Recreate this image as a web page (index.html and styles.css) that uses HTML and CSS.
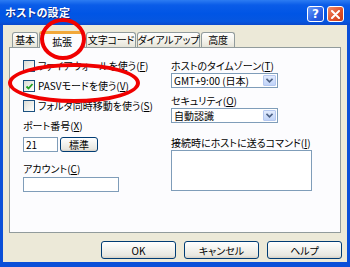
FILE: index.html
```html
<!DOCTYPE html>
<html lang="ja">
<head>
    <meta charset="UTF-8">
    <title>ホストの設定</title>
    <link rel="stylesheet" href="styles.css">
</head>
<body>
    <div class="window">
        <div class="titlebar">
            <span class="title">ホストの設定</span>
            <div class="caption">
                <span class="cap-btn cap-help">?</span>
                <span class="cap-btn cap-close">
                    <svg width="9" height="9" viewBox="0 0 9 9"><path d="M1 1L8 8M8 1L1 8" stroke="#fff" stroke-width="2" stroke-linecap="round"/></svg>
                </span>
            </div>
        </div>
        <div class="client">
            <div class="tabs">
                <span class="tab tab-1">基本</span>
                <span class="tab tab-2 active">拡張</span>
                <span class="tab tab-3">文字コード</span>
                <span class="tab tab-4">ダイアルアップ</span>
                <span class="tab tab-5">高度</span>
            </div>
            <div class="panel">
                <div class="col col-left">
                    <div class="check"><span class="box"></span>ファイアウォールを使う(<u>F</u>)</div>
                    <div class="check"><span class="box checked"><svg width="9" height="9" viewBox="0 0 9 9"><path d="M1.5 4.5L3.5 6.5L7.5 2" stroke="#21a121" stroke-width="1.8" fill="none"/></svg></span>PASVモードを使う(<u>V</u>)</div>
                    <div class="check"><span class="box"></span>フォルダ同時移動を使う(<u>S</u>)</div>
                    <div class="label">ポート番号(<u>X</u>)</div>
                    <div class="port-row">
                        <div class="input input-port">21</div>
                        <div class="btn btn-small">標準</div>
                    </div>
                    <div class="label label-account">アカウント(<u>C</u>)</div>
                    <div class="input input-account"></div>
                </div>
                <div class="col col-right">
                    <div class="label">ホストのタイムゾーン(<u>T</u>)</div>
                    <div class="select">
                        <span class="select-text">GMT+9:00 (日本)</span>
                        <span class="drop"><svg width="7" height="5" viewBox="0 0 7 5"><path d="M0.5 0.8L3.5 3.8L6.5 0.8" stroke="#4d6185" stroke-width="1.6" fill="none"/></svg></span>
                    </div>
                    <div class="label label-sec">セキュリティ(<u>O</u>)</div>
                    <div class="select">
                        <span class="select-text">自動認識</span>
                        <span class="drop"><svg width="7" height="5" viewBox="0 0 7 5"><path d="M0.5 0.8L3.5 3.8L6.5 0.8" stroke="#4d6185" stroke-width="1.6" fill="none"/></svg></span>
                    </div>
                    <div class="label label-cmd">接続時にホストに送るコマンド(<u>I</u>)</div>
                    <div class="textarea"></div>
                </div>
            </div>
            <div class="buttons">
                <div class="btn btn-main">OK</div>
                <div class="btn btn-main">キャンセル</div>
                <div class="btn btn-main">ヘルプ</div>
            </div>
        </div>
        <div class="mark mark-tab"></div>
        <div class="mark mark-pasv"></div>
    </div>
</body>
</html>
```

FILE: styles.css
```css
body {
    margin: 0;
    font-family: "Noto Sans CJK JP", "Noto Sans", sans-serif;
    font-size: 10px;
    font-feature-settings: "palt";
    color: #000;
    background: #fff;
}
u {
    text-decoration: underline;
    text-underline-offset: 1px;
}

.window {
    position: relative;
    width: 350px;
    height: 267px;
    display: flex;
    flex-direction: column;
    background: #0a4fd8;
    overflow: hidden;
}

/* title bar */
.titlebar {
    height: 25px;
    display: flex;
    align-items: center;
    justify-content: space-between;
    padding: 0 6px 0 5px;
    background: linear-gradient(#2c7cf2 0, #0a5ce8 20%, #0055e5 55%, #0656e0 85%, #0a48cc 100%);
}
.title {
    color: #fff;
    font-weight: bold;
    font-size: 11px;
    letter-spacing: 0.3px;
    text-shadow: 1px 1px 0 #0a2a8a;
    margin-top: -1px;
}
.caption {
    display: flex;
    gap: 3px;
    margin-top: 3px;
}
.cap-btn {
    width: 15px;
    height: 14px;
    border: 1px solid #fff;
    border-radius: 3px;
    display: flex;
    align-items: center;
    justify-content: center;
    color: #fff;
    font-family: "DejaVu Sans", sans-serif;
    font-weight: bold;
    font-size: 12px;
}
.cap-help {
    background: linear-gradient(135deg, #6a9cf8, #2a5fe6 60%, #1f4fd0);
}
.cap-close {
    background: linear-gradient(135deg, #f08a68, #e0532d 55%, #c83a18);
}

/* client area */
.client {
    flex: 1;
    margin: 0 3px 5px 3px;
    background: #ece9d8;
    display: flex;
    flex-direction: column;
    padding: 4px 6px 3px 6px;
}

.tabs {
    height: 18px;
    display: flex;
    align-items: flex-end;
    padding-left: 3px;
    position: relative;
    z-index: 1;
}
.tab {
    height: 14px;
    border: 1px solid #919b9c;
    border-bottom: none;
    border-radius: 3px 3px 0 0;
    background: linear-gradient(#fefefe, #f2f1ea 60%, #e6e4d8);
    display: flex;
    align-items: center;
    justify-content: center;
    margin-right: 1px;
    line-height: 12px;
    white-space: nowrap;
    letter-spacing: -0.2px;
    flex-shrink: 0;
}
.tab-1 { width: 24px; }
.tab-2 { width: 46px; }
.tab-3 { width: 48px; }
.tab-4 { width: 61px; }
.tab-5 { width: 32px; }
.tab.active {
    height: 17px;
    margin-bottom: -1px;
    background: #fcfcfe;
    border-top: 3px solid #f2a83a;
    box-sizing: border-box;
    padding-top: 1px;
}

.panel {
    flex: 1;
    background: #fcfcfe;
    border: 1px solid #919b9c;
    display: flex;
    padding: 12px 0 0 13px;
}
.col {
    display: flex;
    flex-direction: column;
}
.col-left {
    width: 148px;
}
.col-right {
    width: 142px;
}

.check {
    height: 12px;
    line-height: 12px;
    margin-bottom: 8px;
    display: flex;
    align-items: center;
    white-space: nowrap;
}
.box {
    width: 10px;
    height: 10px;
    border: 1px solid #1c5180;
    background: linear-gradient(135deg, #dcdcd4, #f6f6f2 70%, #fff);
    margin-right: 3px;
    display: flex;
    align-items: center;
    justify-content: center;
    flex-shrink: 0;
}

.label {
    height: 12px;
    line-height: 12px;
    white-space: nowrap;
}
.col-left .label {
    margin-bottom: 5px;
}
.col-left .label-account {
    margin-top: 11px;
    margin-bottom: 2px;
}

.input {
    height: 13px;
    border: 1px solid #7f9db9;
    background: #fff;
    line-height: 13px;
    padding-left: 2px;
}
.input-port {
    width: 31px;
}
.input-account {
    width: 92px;
}
.port-row {
    display: flex;
    gap: 2px;
}

.btn {
    border: 1px solid #003c74;
    border-radius: 3px;
    background: linear-gradient(#ffffff, #f4f4f0 40%, #e8e7e0 85%, #d6d0c5);
    display: flex;
    align-items: center;
    justify-content: center;
    box-sizing: border-box;
}
.btn-small {
    width: 38px;
    height: 15px;
}

.col-right .label {
    margin-bottom: 1px;
}
.col-right .label-sec {
    margin-top: 7px;
}
.col-right .label-cmd {
    margin-top: 14px;
}
.select {
    width: 105px;
    height: 13px;
    border: 1px solid #7f9db9;
    background: #fff;
    display: flex;
    align-items: center;
    justify-content: space-between;
}
.select-text {
    padding-left: 2px;
    line-height: 13px;
}
.drop {
    width: 13px;
    height: 11px;
    margin-right: 1px;
    border: 1px solid #b5c8f0;
    border-radius: 1px;
    background: linear-gradient(#e2ebfd, #c0d3f8);
    display: flex;
    align-items: center;
    justify-content: center;
    box-sizing: border-box;
}
.textarea {
    width: 139px;
    height: 39px;
    border: 1px solid #7f9db9;
    background: #fff;
}

.buttons {
    display: flex;
    justify-content: flex-end;
    gap: 8px;
    margin-top: 8px;
    margin-right: -1px;
}
.btn-main {
    width: 75px;
    height: 18px;
}

/* red annotation circles drawn over the screenshot */
.mark {
    position: absolute;
    border: 4px solid #f00000;
    border-radius: 50%;
    box-sizing: border-box;
    z-index: 5;
}
.mark-tab {
    left: 40px;
    top: 18px;
    width: 46px;
    height: 42px;
}
.mark-pasv {
    left: 8px;
    top: 63px;
    width: 132px;
    height: 40px;
}
```
